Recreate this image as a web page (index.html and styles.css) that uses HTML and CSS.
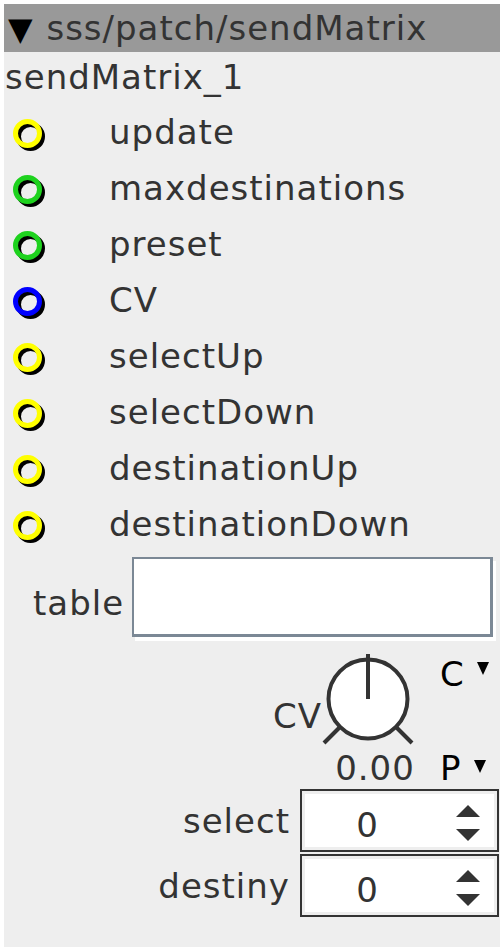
FILE: index.html
```html
<!DOCTYPE html>
<html>
<head>
<meta charset="utf-8">
<link rel="stylesheet" href="styles.css">
</head>
<body>
<div class="panel">
  <div class="header"><span class="tri">▼</span> sss/patch/sendMatrix</div>
  <div class="name">sendMatrix_1</div>
  <div class="inlets">
    <div class="inlet"><svg class="jack bool" width="36" height="36" viewBox="0 0 36 36"><circle class="shadow" cx="17.5" cy="17.5" r="12"/><circle class="ring" cx="14.5" cy="14.5" r="12"/></svg><span class="label">update</span></div>
    <div class="inlet"><svg class="jack int" width="36" height="36" viewBox="0 0 36 36"><circle class="shadow" cx="17.5" cy="17.5" r="12"/><circle class="ring" cx="14.5" cy="14.5" r="12"/></svg><span class="label">maxdestinations</span></div>
    <div class="inlet"><svg class="jack int" width="36" height="36" viewBox="0 0 36 36"><circle class="shadow" cx="17.5" cy="17.5" r="12"/><circle class="ring" cx="14.5" cy="14.5" r="12"/></svg><span class="label">preset</span></div>
    <div class="inlet"><svg class="jack frac" width="36" height="36" viewBox="0 0 36 36"><circle class="shadow" cx="17.5" cy="17.5" r="12"/><circle class="ring" cx="14.5" cy="14.5" r="12"/></svg><span class="label">CV</span></div>
    <div class="inlet"><svg class="jack bool" width="36" height="36" viewBox="0 0 36 36"><circle class="shadow" cx="17.5" cy="17.5" r="12"/><circle class="ring" cx="14.5" cy="14.5" r="12"/></svg><span class="label">selectUp</span></div>
    <div class="inlet"><svg class="jack bool" width="36" height="36" viewBox="0 0 36 36"><circle class="shadow" cx="17.5" cy="17.5" r="12"/><circle class="ring" cx="14.5" cy="14.5" r="12"/></svg><span class="label">selectDown</span></div>
    <div class="inlet"><svg class="jack bool" width="36" height="36" viewBox="0 0 36 36"><circle class="shadow" cx="17.5" cy="17.5" r="12"/><circle class="ring" cx="14.5" cy="14.5" r="12"/></svg><span class="label">destinationUp</span></div>
    <div class="inlet"><svg class="jack bool" width="36" height="36" viewBox="0 0 36 36"><circle class="shadow" cx="17.5" cy="17.5" r="12"/><circle class="ring" cx="14.5" cy="14.5" r="12"/></svg><span class="label">destinationDown</span></div>
  </div>
  <div class="table-row">
    <span class="table-label">table</span>
    <div class="textbox"></div>
  </div>
  <div class="knob-area">
    <span class="knob-label">CV</span>
    <div class="knob-col">
      <svg class="knob" width="96" height="104" viewBox="0 0 96 104">
        <line x1="2" y1="96" x2="18" y2="80"/>
        <line x1="74" y1="80" x2="90" y2="96"/>
        <circle cx="46" cy="52" r="39.5"/>
        <line x1="46" y1="7" x2="46" y2="52"/>
      </svg>
      <span class="knob-value">0.00</span>
    </div>
    <div class="cp-col">
      <div class="cp cp-c">C<svg class="mini-tri" width="12" height="13" viewBox="0 0 12 13"><path d="M0 0H12L6 13Z"/></svg></div>
      <div class="cp cp-p">P<svg class="mini-tri" width="12" height="13" viewBox="0 0 12 13"><path d="M0 0H12L6 13Z"/></svg></div>
    </div>
  </div>
  <div class="spin-row">
    <span class="spin-label">select</span>
    <div class="spinbox">
      <span class="spin-value">0</span>
      <svg class="arrows" width="24" height="36" viewBox="0 0 24 36"><path d="M12 0L24 12H0Z"/><path d="M0 24H24L12 36Z"/></svg>
    </div>
  </div>
  <div class="spin-row">
    <span class="spin-label">destiny</span>
    <div class="spinbox">
      <span class="spin-value">0</span>
      <svg class="arrows" width="24" height="36" viewBox="0 0 24 36"><path d="M12 0L24 12H0Z"/><path d="M0 24H24L12 36Z"/></svg>
    </div>
  </div>
</div>
</body>
</html>
```
FILE: styles.css
```css
html, body {
  margin: 0;
  padding: 0;
  background: #ffffff;
}

.panel {
  margin: 4px 4px 0 4px;
  width: 496px;
  height: 943px;
  background: #eeeeee;
  font-family: "DejaVu Sans", "Verdana", sans-serif;
  font-size: 34px;
  letter-spacing: 1px;
  color: #333333;
  display: flex;
  flex-direction: column;
  overflow: hidden;
}

.header {
  height: 48px;
  line-height: 48px;
  background: #999999;
  padding-left: 4px;
  white-space: nowrap;
}

.header .tri {
  color: #000000;
  letter-spacing: 0;
  font-size: 32px;
  margin-right: 2px;
}

.name {
  height: 53px;
  line-height: 51px;
  padding-left: 1px;
}

.inlets {
  display: flex;
  flex-direction: column;
}

.inlet {
  height: 56px;
  display: flex;
  align-items: flex-start;
}

.jack {
  margin-left: 9px;
  margin-top: 14px;
  flex: none;
}

.jack .shadow {
  fill: none;
  stroke: #000000;
  stroke-width: 5;
}

.jack .ring {
  fill: none;
  stroke: currentColor;
  stroke-width: 5;
}

.jack.bool { color: #ffff00; }
.jack.int { color: #1ed21e; }
.jack.frac { color: #0000ff; }

.label {
  margin-left: 60px;
  line-height: 55px;
}

.table-row {
  display: flex;
  margin-top: 4px;
  padding-left: 29px;
  height: 87px;
  align-items: flex-start;
}

.table-label {
  line-height: 36px;
  margin-top: 28px;
}

.textbox {
  margin-left: 8px;
  width: 356px;
  height: 75px;
  background: #ffffff;
  border-top: 2px solid #7b8895;
  border-left: 2px solid #7b8895;
  border-right: 3px solid #7b8895;
  border-bottom: 3px solid #7b8895;
  box-shadow: 3px 4px 0 #ffffff;
}

.knob-area {
  height: 144px;
  display: flex;
  justify-content: flex-end;
  padding-right: 3px;
}

.knob-label {
  line-height: 36px;
  margin-top: 54px;
}

.knob-col {
  width: 96px;
  display: flex;
  flex-direction: column;
  align-items: center;
}

.knob {
  margin-top: 3px;
}

.knob line {
  stroke: #333333;
  stroke-width: 4;
}

.knob circle {
  fill: #ffffff;
  stroke: #333333;
  stroke-width: 4;
}

.knob-value {
  line-height: 35px;
  margin-left: 10px;
}

.cp-col {
  margin-left: 22px;
  width: 57px;
  display: flex;
  flex-direction: column;
  justify-content: space-between;
  padding-top: 12px;
  padding-bottom: 2px;
}

.cp {
  display: flex;
  align-items: flex-start;
  line-height: 36px;
  height: 36px;
  color: #000000;
}

.mini-tri {
  margin-left: 12px;
  fill: #000000;
}

.cp-c .mini-tri { margin-top: 6px; }
.cp-p .mini-tri { margin-top: 10px; }

.spin-row {
  display: flex;
  justify-content: flex-end;
  align-items: center;
  margin-top: 1px;
  padding-right: 1px;
}

.spin-row + .spin-row {
  margin-top: 2px;
}

.spin-label {
  line-height: 36px;
  margin-right: 10px;
}

.spinbox {
  width: 195px;
  height: 59px;
  border: 2px solid #333333;
  background: #ffffff;
  box-shadow: inset 0 0 0 3px #eeeeee;
  display: flex;
  align-items: center;
}

.spin-value {
  width: 130px;
  text-align: center;
  line-height: 36px;
  padding-top: 8px;
  letter-spacing: 0;
}

.arrows {
  margin-left: 24px;
  margin-top: 4px;
  fill: #333333;
}
```
